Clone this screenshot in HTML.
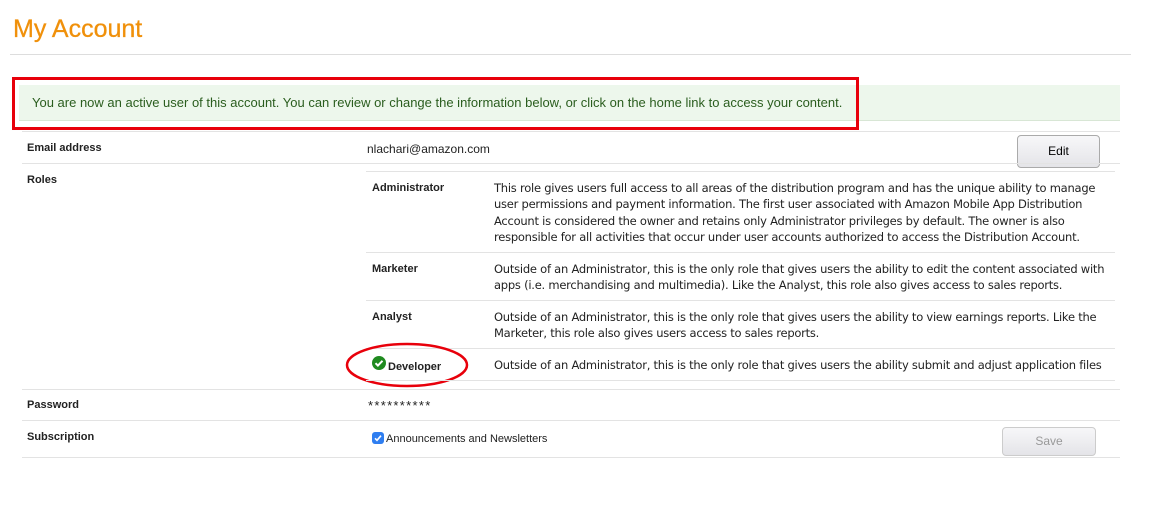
<!DOCTYPE html>
<html><head><meta charset="utf-8"><style>
body{margin:0;width:1167px;height:514px;background:#fff;position:relative;font-family:"Liberation Sans",Arial,sans-serif;overflow:hidden}
.a{position:absolute;white-space:nowrap}
.h{position:absolute;height:1px;background:#e3e3e3}
.lb{font-weight:bold;font-size:11px;color:#222}
.d{font-size:11.5px;color:#222;line-height:16.3px;font-family:"DejaVu Sans",sans-serif;letter-spacing:-0.24px}
.btn{position:absolute;border:1px solid #aaa;border-radius:4px;background:linear-gradient(#f7f7f9,#e4e4e8);font-size:12px;text-align:center;box-sizing:border-box}
</style></head><body>
<div class="a" style="left:13px;top:15px;font-size:25px;color:#f0900a;-webkit-text-stroke:0.3px #f0900a">My Account</div>
<div class="h" style="left:10px;top:54px;width:1121px;background:#ddd"></div>
<div class="a" style="left:19px;top:85px;width:1101px;height:35px;background:#edf7ec;border-bottom:1px solid #d8e6d5"></div>
<div class="a" style="left:32px;top:95px;font-size:13px;color:#2a5d1e">You are now an active user of this account. You can review or change the information below, or click on the home link to access your content.</div>
<div class="a" style="left:12px;top:77px;width:841px;height:47px;border:3px solid #e8000b"></div>
<div class="h" style="left:22px;top:131px;width:1098px"></div>
<div class="a lb" style="left:27px;top:142px">Email address</div>
<div class="a" style="left:367px;top:142px;font-size:12px;color:#222">nlachari@amazon.com</div>
<div class="btn" style="left:1017px;top:135px;width:83px;height:33px;line-height:31px">Edit</div>
<div class="h" style="left:22px;top:163px;width:1098px"></div>
<div class="a lb" style="left:27px;top:174px">Roles</div>
<div class="h" style="left:366px;top:171px;width:749px"></div>
<div class="a lb" style="left:372px;top:182px">Administrator</div>
<div class="a d" style="left:494px;top:180px">This role gives users full access to all areas of the distribution program and has the unique ability to manage<br>user permissions and payment information. The first user associated with Amazon Mobile App Distribution<br>Account is considered the owner and retains only Administrator privileges by default. The owner is also<br>responsible for all activities that occur under user accounts authorized to access the Distribution Account.</div>
<div class="h" style="left:366px;top:252px;width:749px"></div>
<div class="a lb" style="left:372px;top:263px">Marketer</div>
<div class="a d" style="left:494px;top:261px">Outside of an Administrator, this is the only role that gives users the ability to edit the content associated with<br>apps (i.e. merchandising and multimedia). Like the Analyst, this role also gives access to sales reports.</div>
<div class="h" style="left:366px;top:300px;width:749px"></div>
<div class="a lb" style="left:372px;top:311px">Analyst</div>
<div class="a d" style="left:494px;top:309px">Outside of an Administrator, this is the only role that gives users the ability to view earnings reports. Like the<br>Marketer, this role also gives users access to sales reports.</div>
<div class="h" style="left:366px;top:348px;width:749px"></div>
<svg class="a" style="left:372px;top:356px" width="14" height="14"><circle cx="7" cy="7" r="7" fill="#1f8a1f"/><path d="M3.5 7.2l2.4 2.4 4.6-4.8" stroke="#fff" stroke-width="2" fill="none"/></svg>
<div class="a lb" style="left:388px;top:361px">Developer</div>
<div class="a d" style="left:494px;top:357px">Outside of an Administrator, this is the only role that gives users the ability submit and adjust application files</div>
<svg class="a" style="left:344px;top:341px" width="126" height="48"><ellipse cx="63" cy="24" rx="60" ry="21" fill="none" stroke="#e8000b" stroke-width="2.5"/></svg>
<div class="h" style="left:366px;top:380px;width:749px"></div>
<div class="h" style="left:22px;top:389px;width:1098px"></div>
<div class="a lb" style="left:27px;top:399px">Password</div>
<div class="a" style="left:368px;top:398px;font-size:13px;letter-spacing:1.3px;color:#222">**********</div>
<div class="h" style="left:22px;top:420px;width:1098px"></div>
<div class="a lb" style="left:27px;top:431px">Subscription</div>
<div class="a" style="left:372px;top:432px;width:12px;height:12px;background:#2f7ef0;border-radius:3px"></div>
<svg class="a" style="left:372px;top:432px" width="12" height="12"><path d="M3 6.3l2 2 4-4.6" stroke="#fff" stroke-width="1.6" fill="none"/></svg>
<div class="a" style="left:386px;top:433px;font-size:11px;color:#222">Announcements and Newsletters</div>
<div class="btn" style="left:1002px;top:427px;width:94px;height:29px;line-height:27px;color:#999;border-color:#ccc">Save</div>
<div class="h" style="left:22px;top:457px;width:1098px"></div>
</body></html>
